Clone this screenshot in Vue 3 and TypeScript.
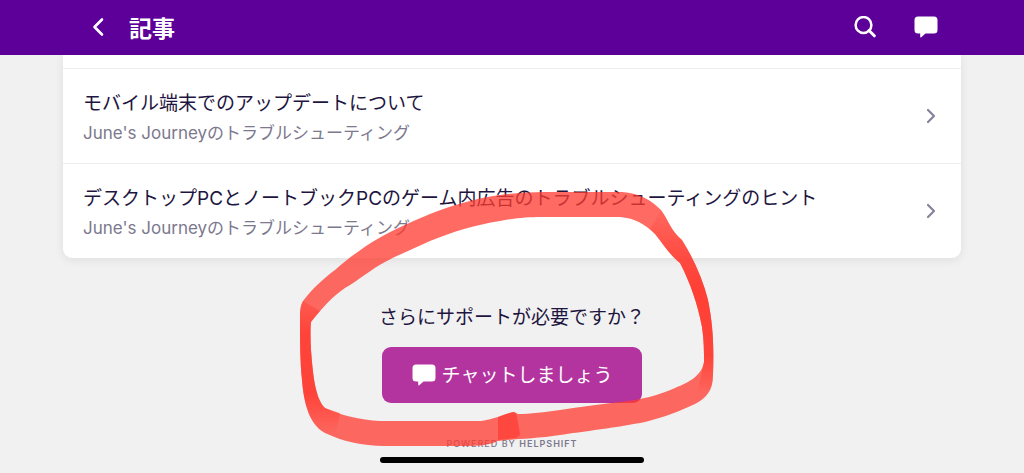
<script setup lang="ts">
interface Article {
  title: string
  section: string
}

const articles: Article[] = [
  { title: 'モバイル端末でのアップデートについて', section: "June's Journeyのトラブルシューティング" },
  {
    title: 'デスクトップPCとノートブックPCのゲーム内広告のトラブルシューティングのヒント',
    section: "June's Journeyのトラブルシューティング",
  },
]
</script>

<template>
  <div class="page">
    <header class="bar">
      <button class="icon-button" type="button" aria-label="戻る">
        <svg width="12" height="20" viewBox="0 0 12 20">
          <path d="M10 2.5 L2.5 10 L10 17.5" fill="none" stroke="#fff" stroke-width="2.6" stroke-linecap="round" stroke-linejoin="round" />
        </svg>
      </button>
      <h1 class="heading">記事</h1>
      <button class="icon-button search" type="button" aria-label="検索">
        <svg width="22" height="22" viewBox="0 0 22 22">
          <circle cx="9.5" cy="9" r="7.9" fill="none" stroke="#fff" stroke-width="2.5" />
          <path d="M15 14.5 L20.3 19.8" stroke="#fff" stroke-width="3" stroke-linecap="round" />
        </svg>
      </button>
      <button class="icon-button" type="button" aria-label="チャット">
        <svg width="24" height="22" viewBox="0 0 24 22">
          <path class="bubble" d="M4 .5 H20 Q23.5 .5 23.5 4 V14 Q23.5 17.5 20 17.5 H11.5 L7.3 21.2 Q6.2 21.8 6.2 20.5 V17.5 H4 Q.5 17.5 .5 14 V4 Q.5 .5 4 .5 Z" />
        </svg>
      </button>
    </header>

    <main class="content">
      <ul class="card">
        <li v-for="article in articles" :key="article.title" class="item">
          <a class="row" href="#">
            <span class="texts">
              <span class="title">{{ article.title }}</span>
              <span class="section">{{ article.section }}</span>
            </span>
            <svg class="chevron" width="10" height="16" viewBox="0 0 10 16">
              <path d="M2 2 L8 8 L2 14" fill="none" stroke="#86829a" stroke-width="2.2" stroke-linecap="round" stroke-linejoin="round" />
            </svg>
          </a>
        </li>
      </ul>

      <section class="support">
        <p class="question">さらにサポートが必要ですか？</p>
        <button class="chat" type="button">
          <svg width="24" height="22" viewBox="0 0 24 22">
            <path class="bubble" d="M4 .5 H20 Q23.5 .5 23.5 4 V14 Q23.5 17.5 20 17.5 H11.5 L7.3 21.2 Q6.2 21.8 6.2 20.5 V17.5 H4 Q.5 17.5 .5 14 V4 Q.5 .5 4 .5 Z" />
          </svg>
          <span class="chat-label">チャットしましょう</span>
        </button>
      </section>
    </main>

    <footer class="foot">
      <p class="powered">POWERED BY <b>HELPSHIFT</b></p>
      <div class="home"></div>
    </footer>

    <svg class="marker" width="424" height="264" viewBox="296 188 424 264" aria-hidden="true">
      <defs>
        <linearGradient id="left-ink" gradientUnits="userSpaceOnUse" x1="0" y1="300" x2="0" y2="434">
          <stop offset="0" stop-color="#ff3b30" stop-opacity="0.3" />
          <stop offset="0.25" stop-color="#ff3b30" stop-opacity="0.8" />
          <stop offset="0.7" stop-color="#ff3b30" stop-opacity="0.8" />
          <stop offset="1" stop-color="#ff3b30" stop-opacity="0" />
        </linearGradient>
        <linearGradient id="right-ink" gradientUnits="userSpaceOnUse" x1="0" y1="205" x2="0" y2="394">
          <stop offset="0" stop-color="#ff3b30" stop-opacity="0" />
          <stop offset="0.25" stop-color="#ff3b30" stop-opacity="0.6" />
          <stop offset="0.45" stop-color="#ff3b30" stop-opacity="0.9" />
          <stop offset="0.8" stop-color="#ff3b30" stop-opacity="0.8" />
          <stop offset="1" stop-color="#ff3b30" stop-opacity="0" />
        </linearGradient>
      </defs>
      <path
        class="ink"
        fill-rule="evenodd"
        d="M303 301 C313 288 324 278 335 270 C346 260 356 253 366 246 C386 233 408 223 430 214 C455 204 478 198 500 195 C515 193 530 192 545 192 H622 C640 193 652 201 661 210 C669 221 671 231 682 240 C694 259 703 280 708 300 C713 325 714 345 713 375 C713 391 706 398 695 404 C680 411 665 417 645 422 C620 427 580 432 560 435 C535 439 510 439 498 441 C490 445 480 446 465 446 H385 C362 446 342 441 325 433 C310 425 304 405 302 380 C300 360 300 340 300 315 Q300 306 303 301 Z
        M311 322 C322 308 333 296 345 288 C359 280 370 270 385 262 C400 254 415 248 430 241 C455 231 475 225 500 221 C515 218 530 217 540 217 H620 C635 218 646 225 655 234 C663 244 668 253 680 263 C690 282 698 305 702 327 C704 340 704 352 704 362 C702 375 690 382 675 388 C660 395 640 400 620 402 C600 404 580 407 560 410 C545 412 530 414 518 414 L514 412 Q507 413 498 417 C490 419 485 421 478 421 H380 C360 420 340 415 325 408 C315 398 313 375 311 350 Q310 332 311 322 Z"
      />
      <path fill="url(#left-ink)" d="M303 301 Q300 306 300 315 C300 340 300 360 302 380 C304 405 310 425 325 433 L335 437 L340 413 L325 408 C315 398 313 375 311 350 Q310 332 311 322 L320 311 Z" />
      <path fill="url(#right-ink)" d="M661 210 C669 221 671 231 682 240 C694 259 703 280 708 300 C713 325 714 345 713 375 C713 391 706 398 695 404 L704 362 C704 352 704 340 702 327 C698 305 690 282 680 263 C668 253 663 244 655 234 L650 229 Z" />
      <path class="ink dense" d="M498 417 L513 412 Q516 412 517 417 L520 434 Q519 437 515 438 L498 440 Z" />
    </svg>
  </div>
</template>

<style>
body {
  margin: 0;
  background: #f1f1f1;
}
</style>

<style scoped>
.page {
  position: relative;
  overflow: hidden;
  min-height: 100vh;
  display: flex;
  flex-direction: column;
  background: #f1f1f1;
  color: #1e1540;
  font-family: Inter, "Noto Sans CJK JP", sans-serif;
}
.bar {
  display: flex;
  align-items: center;
  height: 55px;
  padding: 0 82px 2px 88px;
  box-sizing: border-box;
  background: #5c0099;
}
.icon-button {
  display: flex;
  align-items: center;
  justify-content: center;
  padding: 4px;
  border: 0;
  background: none;
}
.heading {
  flex: 1;
  margin: 0 0 0 21px;
  padding-top: 4px;
  color: #fff;
  font-size: 23px;
  line-height: 32px;
  font-weight: 700;
}
.search {
  margin-right: 30px;
}
.bubble {
  fill: #fff;
}
.content {
  padding: 0 63px;
}
.card {
  margin: 0;
  padding: 13px 0 0;
  list-style: none;
  border-radius: 0 0 9px 9px;
  background: #fff;
  box-shadow: 0 2px 10px rgba(0, 0, 0, 0.08);
}
.item {
  border-top: 1px solid #ededed;
}
.row {
  display: flex;
  align-items: center;
  justify-content: space-between;
  padding: 18px 25px 18px 20px;
  color: inherit;
  text-decoration: none;
}
.texts {
  display: flex;
  flex-direction: column;
  gap: 2px;
  padding-top: 2px;
}
.title {
  font-size: 19px;
  line-height: 30px;
}
.section {
  color: #7c788d;
  font-size: 17px;
  line-height: 24px;
}
.support {
  display: flex;
  flex-direction: column;
  align-items: center;
  gap: 14px;
  padding-top: 45px;
}
.question {
  margin: 0;
  font-size: 19px;
  line-height: 30px;
}
.chat {
  display: flex;
  align-items: center;
  gap: 6px;
  padding: 12px 30px;
  border: 0;
  border-radius: 9px;
  background: #b3339f;
  color: #fff;
  font-family: inherit;
  font-size: 19px;
  line-height: 30px;
}
.chat-label {
  padding-top: 2px;
}
.foot {
  display: flex;
  flex-direction: column;
  align-items: center;
  gap: 7px;
  margin-top: auto;
  padding: 34px 0 10px;
}
.powered {
  margin: 0;
  color: #7c788d;
  font-size: 9px;
  line-height: 12px;
  font-weight: 500;
  letter-spacing: 1px;
}
.powered b {
  font-weight: 600;
}
.home {
  width: 264px;
  height: 6px;
  border-radius: 3px;
  background: #000;
}
.marker {
  position: absolute;
  top: 188px;
  left: 50%;
  margin-left: -216px;
  pointer-events: none;
}
.ink {
  fill: #ff3b30;
  fill-opacity: 0.76;
}
.dense {
  fill-opacity: 0.7;
}
</style>
